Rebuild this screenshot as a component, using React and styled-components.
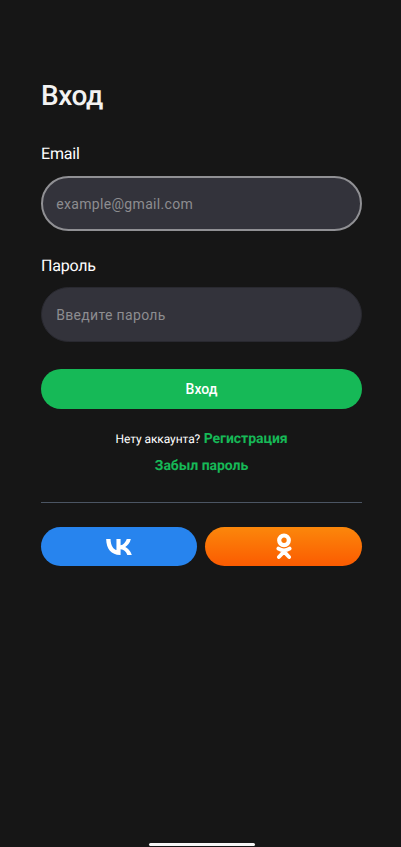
import React from 'react';
import styled, { createGlobalStyle } from 'styled-components';

const GlobalStyle = createGlobalStyle`
  *, *::before, *::after { box-sizing: border-box; }
  body { margin: 0; background: #161616; }
  button, input { font: inherit; }
`;

const Screen = styled.main`
  display: flex;
  flex-direction: column;
  justify-content: space-between;
  height: 847px;
  padding: 76px 39px 0 41px;
  overflow: hidden;
  background: #161616;
  color: #fff;
  font-family: Roboto, 'Noto Sans', sans-serif;
  text-rendering: geometricPrecision;
`;

const Form = styled.form`
  display: flex;
  flex-direction: column;
`;

const Title = styled.h1`
  margin: 0 0 27px;
  color: #f2f2f2;
  font-size: 28px;
  font-weight: 500;
  line-height: 40px;
  letter-spacing: -0.4px;
`;

const Field = styled.label`
  display: flex;
  flex-direction: column;
  gap: ${(p) => p.$labelGap}px;
  margin-bottom: ${(p) => p.$gap}px;
`;

const FieldLabel = styled.span`
  font-size: 16px;
  line-height: 22px;
  letter-spacing: -0.2px;
`;

const Input = styled.input`
  width: 100%;
  height: 55px;
  padding: 1px 14px 0 ${(p) => (p.$active ? 13.2 : 14.2)}px;
  border: ${(p) => (p.$active ? '2px solid #909094' : '1px solid #292930')};
  border-radius: 28px;
  outline: none;
  background: #33333b;
  color: #fff;
  font-size: 14px;
  letter-spacing: 0.33px;

  &::placeholder { color: #8d8d90; opacity: 1; }
`;

const SubmitButton = styled.button`
  height: 40px;
  padding: 0;
  border: 0;
  border-radius: 20px;
  background: #16b957;
  color: #fff;
  font-size: 14px;
  font-weight: 500;
`;

const Links = styled.div`
  display: flex;
  flex-direction: column;
  align-items: center;
  margin-top: 17px;
`;

const LinkRow = styled.div`
  display: flex;
  align-items: center;
  gap: 3.5px;
  height: 27px;
  line-height: 17px;
  white-space: nowrap;
`;

const Hint = styled.span`
  font-size: 12px;
  letter-spacing: -0.07px;
`;

const TextLink = styled.a`
  color: #16b957;
  font-size: 14px;
  font-weight: 700;
  letter-spacing: -0.05px;
`;

const Divider = styled.hr`
  width: 100%;
  height: 1px;
  margin: 22px 0 24px;
  border: 0;
  background: #4b5563;
`;

const SocialRow = styled.div`
  display: grid;
  grid-template-columns: 156px 157px;
  gap: 8px;
`;

const SocialButton = styled.button`
  display: flex;
  align-items: center;
  justify-content: center;
  height: 39px;
  padding: 0;
  border: 0;
  border-radius: 20px;
  background: ${(p) => p.$fill};

  svg { display: block; }
`;

const HomeIndicator = styled.div`
  align-self: center;
  width: 106px;
  height: 3px;
  margin-bottom: 1px;
  border-radius: 2px;
  background: #f5f5f5;
`;

const VkIcon = () => (
  <svg width="26" height="16" viewBox="17.5 30.4 66.9 41.7" fill="#fff" aria-label="VK">
    <path d="M53.7 72.042c-22.8 0-35.7-15.6-36.2-41.6h11.4c.4 19.1 8.8 27.2 15.4 28.8v-28.8h10.8v16.5c6.6-.7 13.5-8.2 15.9-16.5h10.8c-1.8 10.2-9.3 17.7-14.6 20.8 5.3 2.5 13.9 9.1 17.2 20.8h-11.8c-2.5-7.9-8.9-14-17.5-14.9v14.9z" />
  </svg>
);

const OkIcon = () => (
  <svg width="16" height="27" viewBox="0 0 16 27" fill="none" stroke="#fff" strokeLinecap="round" strokeLinejoin="round" aria-label="OK">
    <circle cx="8" cy="7.3" r="4.8" strokeWidth="4.2" />
    <path d="M2.4 15.6Q8 19.2 13.6 15.6M8 18.6L2.9 24M8 18.6L13.1 24" strokeWidth="3.8" />
  </svg>
);

export default function App() {
  return (
    <>
      <GlobalStyle />
      <Screen>
        <Form>
          <Title>Вход</Title>
          <Field $labelGap={11} $gap={24}>
            <FieldLabel>Email</FieldLabel>
            <Input $active type="email" placeholder="example@gmail.com" />
          </Field>
          <Field $labelGap={10} $gap={27}>
            <FieldLabel>Пароль</FieldLabel>
            <Input type="password" placeholder="Введите пароль" />
          </Field>
          <SubmitButton type="submit">Вход</SubmitButton>
          <Links>
            <LinkRow>
              <Hint>Нету аккаунта?</Hint>
              <TextLink>Регистрация</TextLink>
            </LinkRow>
            <LinkRow>
              <TextLink>Забыл пароль</TextLink>
            </LinkRow>
          </Links>
          <Divider />
          <SocialRow>
            <SocialButton type="button" $fill="#2784ee"><VkIcon /></SocialButton>
            <SocialButton type="button" $fill="linear-gradient(#fb870b, #fb5b01)"><OkIcon /></SocialButton>
          </SocialRow>
        </Form>
        <HomeIndicator />
      </Screen>
    </>
  );
}
